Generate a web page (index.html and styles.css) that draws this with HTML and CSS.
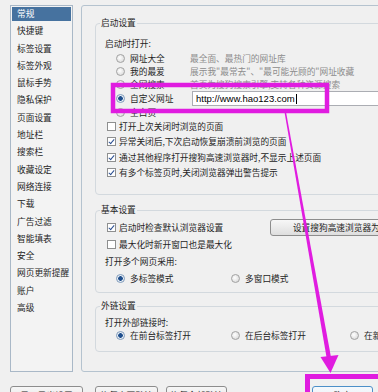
FILE: index.html
```html
<!DOCTYPE html>
<html lang="zh-CN">

<head>
    <meta charset="UTF-8">
    <meta name="viewport" content="width=device-width, initial-scale=1.0">
    <title>选项</title>
    <link rel="stylesheet" href="styles.css">
</head>

<body>
    <div class="dialog">
        <div class="main">
            <ul class="nav">
                <li class="active">常规</li>
                <li>快捷键</li>
                <li>标签设置</li>
                <li>标签外观</li>
                <li>鼠标手势</li>
                <li>隐私保护</li>
                <li>页面设置</li>
                <li>地址栏</li>
                <li>搜索栏</li>
                <li>收藏设定</li>
                <li>网络连接</li>
                <li>下载</li>
                <li>广告过滤</li>
                <li>智能填表</li>
                <li>安全</li>
                <li>网页更新提醒</li>
                <li>账户</li>
                <li>高级</li>
            </ul>

            <div class="panel">
                <!-- 启动设置 -->
                <fieldset class="group g1">
                    <legend>启动设置</legend>
                    <div class="body">
                        <div class="head">启动时打开:</div>
                        <div class="opt"><span class="radio"></span><span class="name">网址大全</span><span class="desc">最全面、最热门的网址库</span></div>
                        <div class="opt"><span class="radio"></span><span class="name">我的最爱</span><span class="desc">展示我"最常去"、"最可能光顾的"网址收藏</span></div>
                        <div class="opt"><span class="radio"></span><span class="name">全网搜索</span><span class="desc">首页为搜狗搜索引擎,支持各种资源搜索</span></div>
                        <div class="opt custom"><span class="radio on"></span><span class="name">自定义网址</span>
                            <div class="textbox">http://www.hao123.com<span class="caret"></span></div>
                        </div>
                        <div class="opt"><span class="radio"></span><span class="name">空白页</span></div>
                        <div class="check-row"><span class="check"></span>打开上次关闭时浏览的页面</div>
                        <div class="check-row"><span class="check on"></span>异常关闭后,下次启动恢复崩溃前浏览的页面</div>
                        <div class="check-row"><span class="check on"></span>通过其他程序打开搜狗高速浏览器时,不显示上述页面</div>
                        <div class="check-row"><span class="check on"></span>有多个标签页时,关闭浏览器弹出警告提示</div>
                    </div>
                </fieldset>

                <!-- 基本设置 -->
                <fieldset class="group g2">
                    <legend>基本设置</legend>
                    <div class="body">
                        <div class="check-row tall"><span class="check on"></span><span class="fixed">启动时检查默认浏览器设置</span>
                            <button class="btn wide">设置搜狗高速浏览器为默认</button>
                        </div>
                        <div class="check-row tall"><span class="check"></span>最大化时新开窗口也是最大化</div>
                        <div class="head">打开多个网页采用:</div>
                        <div class="multi">
                            <div class="opt"><span class="radio on"></span>多标签模式</div>
                            <div class="opt"><span class="radio"></span>多窗口模式</div>
                        </div>
                    </div>
                </fieldset>

                <!-- 外链设置 -->
                <fieldset class="group g3">
                    <legend>外链设置</legend>
                    <div class="body">
                        <div class="head">打开外部链接时:</div>
                        <div class="multi">
                            <div class="opt"><span class="radio on"></span>在前台标签打开</div>
                            <div class="opt"><span class="radio"></span>在后台标签打开</div>
                            <div class="opt"><span class="radio"></span>在新窗口打开</div>
                        </div>
                    </div>
                </fieldset>
            </div>
        </div>

        <div class="footer">
            <button class="btn b1">导入导出设置</button>
            <button class="btn b2">恢复本页默认</button>
            <button class="btn b3">恢复全部默认</button>
            <button class="btn ok">确定</button>
        </div>

        <!-- annotation marks drawn over the dialog -->
        <svg class="marks" width="378" height="392" viewBox="0 0 378 392">
            <rect x="113" y="85" width="214" height="26" fill="none" stroke="#e01ce0" stroke-width="4.5" />
            <polygon points="284.5,112 286,112 331.5,360 327,360" fill="#e01ce0" />
            <polygon points="320.5,357 338.5,355 330.5,373" fill="#e01ce0" />
            <rect x="307.5" y="376.5" width="80" height="30" fill="none" stroke="#e01ce0" stroke-width="5" />
        </svg>
    </div>
</body>

</html>
```

FILE: styles.css
```css
body {
    margin: 0;
    background: #f0f0f0;
    font-family: "Noto Sans CJK SC", "Noto Sans", sans-serif;
    font-size: 8.7px;
    color: #1e1e1e;
}

.dialog {
    position: relative;
    width: 378px;
    height: 392px;
    overflow: hidden;
}

.main {
    display: flex;
    gap: 8px;
    padding: 5px 0 0 10px;
}

/* left category list */
.nav {
    list-style: none;
    flex: none;
    width: 63px;
    height: 367px;
    box-sizing: border-box;
    margin: 0;
    padding: 1px;
    border: 1px solid #a9b8c7;
    background: #f3f3f3;
}

.nav li {
    height: 14px;
    line-height: 14px;
    padding-left: 5px;
    margin-bottom: 3.3px;
    white-space: nowrap;
}

.nav li.active {
    background: #46729f;
    color: #fff;
}

/* right settings panel */
.panel {
    flex: none;
    width: 340px;
    height: 367px;
    box-sizing: border-box;
    border: 1px solid #b5c3cf;
    border-radius: 3px;
    padding: 11px 0 0 13px;
}

.group {
    margin: 0;
    padding: 0;
    width: 310px;
    border: 1px solid #d3d9de;
    border-radius: 4px;
}

.group legend {
    margin-left: 4px;
    padding: 0 1px;
    line-height: 12px;
}

.g1 .body {
    padding: 7.5px 0 13.5px 9px;
}

.g2 {
    margin-top: 9px;
}

.g2 .body {
    padding: 2.5px 0 7px 9px;
}

.g3 {
    margin-top: 7px;
}

.g3 .body {
    padding: 3.5px 0 8.5px 9px;
}

.head {
    height: 13px;
    line-height: 13px;
    margin-bottom: 2px;
}

.g2 .head {
    margin-top: 2.5px;
    margin-bottom: 3px;
}

.g3 .head {
    margin-bottom: 0;
}

.opt {
    display: flex;
    align-items: center;
    height: 13px;
    padding-left: 11px;
    white-space: nowrap;
}

.opt.custom {
    height: 15px;
}

.name {
    width: 60px;
    flex: none;
}

.desc {
    color: #8c8c8c;
}

.multi {
    display: grid;
    grid-template-columns: 115px 119px auto;
    height: 14px;
    padding-left: 11px;
}

.multi .opt {
    padding-left: 0;
    height: 14px;
}

.radio {
    flex: none;
    width: 9px;
    height: 9px;
    margin-right: 5px;
    box-sizing: border-box;
    border: 1px solid #a2a2a2;
    border-radius: 50%;
    background: radial-gradient(circle at 40% 40%, #ffffff, #d2d2d2);
}

.radio.on {
    border-color: #7f9bbb;
    background: radial-gradient(circle, #1f4f8d 0 2px, #e9eef4 2.6px);
}

.check-row {
    display: flex;
    align-items: center;
    height: 15.5px;
    padding-left: 2px;
    white-space: nowrap;
}

.check-row.tall {
    height: 17px;
}

.check {
    position: relative;
    flex: none;
    width: 9px;
    height: 9px;
    margin-right: 3px;
    box-sizing: border-box;
    border: 1px solid #8e8f8f;
    background: #fff;
}

.check.on::after {
    content: "";
    position: absolute;
    left: 2px;
    top: 0;
    width: 2px;
    height: 5px;
    border: solid #2b4f91;
    border-width: 0 1.5px 1.5px 0;
    transform: rotate(40deg);
}

.fixed {
    width: 151px;
    flex: none;
}

.textbox {
    width: 220px;
    height: 15px;
    margin-left: 2px;
    box-sizing: border-box;
    border: 1px solid #abadb3;
    background: #fff;
    padding-left: 3px;
    font-family: "Liberation Sans", Arial, sans-serif;
    font-size: 9.5px;
    line-height: 13px;
    color: #000;
}

.caret {
    display: inline-block;
    width: 1px;
    height: 10px;
    margin-left: 1px;
    background: #000;
    vertical-align: middle;
}

.btn {
    height: 20px;
    box-sizing: border-box;
    padding: 0;
    border: 1px solid #8d8d8d;
    border-radius: 3px;
    background: linear-gradient(#f7f7f7, #dedede);
    font: inherit;
    color: #1e1e1e;
    line-height: 18px;
    text-align: center;
}

.btn.wide {
    width: 150px;
    height: 17px;
    line-height: 15px;
}

.footer {
    display: flex;
    padding: 14px 0 0 10px;
}

.b1 {
    width: 73px;
}

.b2 {
    width: 63px;
    margin-left: 12px;
}

.b3 {
    width: 61px;
    margin-left: 8px;
}

.ok {
    width: 61px;
    margin-left: auto;
    margin-right: 5px;
    border-color: #4d90c9;
    background: linear-gradient(#f6f9fc, #e3edf6);
}

.marks {
    position: absolute;
    left: 0;
    top: 0;
    pointer-events: none;
}
```
